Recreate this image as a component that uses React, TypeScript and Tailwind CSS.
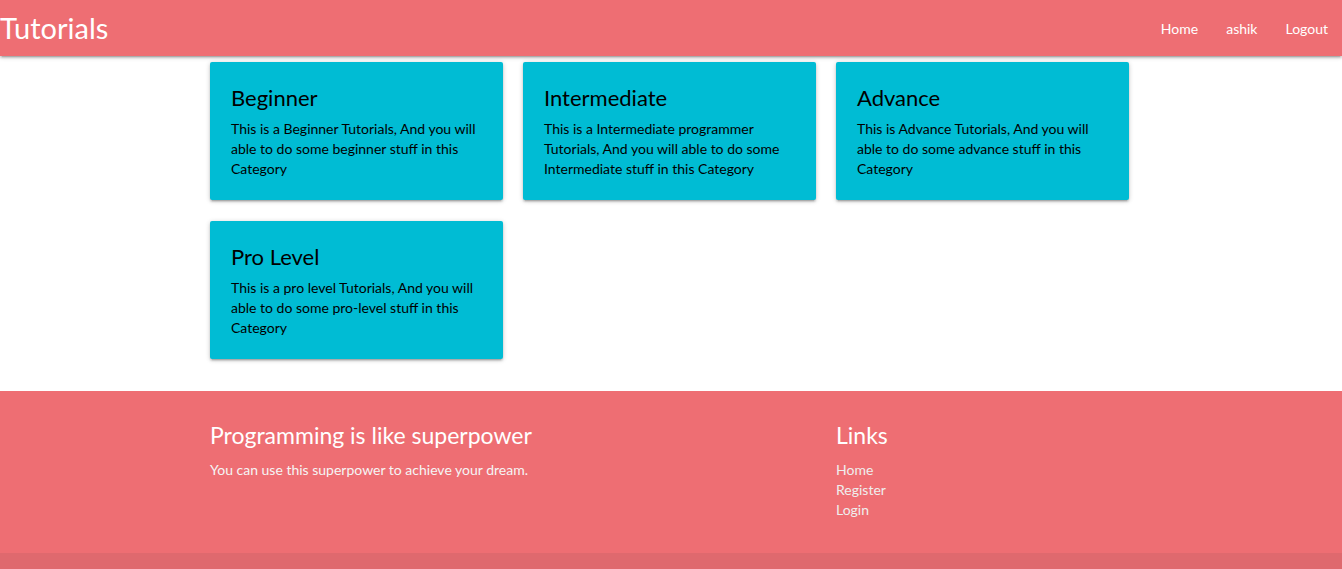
const cards = [
  {
    title: "Beginner",
    lines: ["This is a Beginner Tutorials, And you will", "able to do some beginner stuff in this", "Category"],
  },
  {
    title: "Intermediate",
    lines: ["This is a Intermediate programmer", "Tutorials, And you will able to do some", "Intermediate stuff in this Category"],
  },
  {
    title: "Advance",
    lines: ["This is Advance Tutorials, And you will", "able to do some advance stuff in this", "Category"],
  },
  {
    title: "Pro Level",
    lines: ["This is a pro level Tutorials, And you will", "able to do some pro-level stuff in this", "Category"],
  },
];

function Card({ title, lines }: { title: string; lines: string[] }) {
  return (
    <div className="h-[138px] rounded-[2px] bg-[#00bcd4] pl-[21px] pt-[20px] text-black shadow-[0_2px_2px_0_rgba(0,0,0,0.14),0_3px_1px_-2px_rgba(0,0,0,0.12),0_1px_5px_0_rgba(0,0,0,0.2)]">
      <span className="block text-[22px] leading-[32px]">{title}</span>
      <p className="mt-[5px] text-[14px] leading-[20px]">
        {lines.map((l) => (
          <span key={l} className="block whitespace-nowrap">
            {l}
          </span>
        ))}
      </p>
    </div>
  );
}

export default function App() {
  return (
    <div
      className="min-h-[569px] bg-white"
      style={{ fontFamily: 'Lato, "Open Sans", sans-serif' }}
    >
      {/* Nav */}
      <nav className="relative z-10 flex h-[56px] items-center justify-between bg-[#ee6e73] text-white shadow-[0_2px_2px_0_rgba(0,0,0,0.14),0_3px_1px_-2px_rgba(0,0,0,0.12),0_1px_5px_0_rgba(0,0,0,0.2)]">
        <a className="text-[29px] leading-[56px]">Tutorials</a>
        <ul className="flex text-[14px]">
          <li className="px-[14px]">Home</li>
          <li className="px-[14px]">ashik</li>
          <li className="px-[14px]">Logout</li>
        </ul>
      </nav>

      {/* Cards */}
      <main className="ml-[210px] w-[919px] pt-[6px] pb-[32px]">
        <div className="grid grid-cols-3 gap-x-[20px] gap-y-[21px]">
          {cards.map((c) => (
            <Card key={c.title} title={c.title} lines={c.lines} />
          ))}
        </div>
      </main>

      {/* Footer */}
      <footer className="bg-[#ee6e73] text-white">
        <div className="ml-[210px] grid h-[162px] w-[919px] grid-cols-3 gap-x-[20px] pt-[29px]">
          <div className="col-span-2">
            <h5 className="text-[23px] leading-[30px]">Programming is like superpower</h5>
            <p className="mt-[10px] text-[14px] leading-[20px] text-[#f5f5f5]">
              You can use this superpower to achieve your dream.
            </p>
          </div>
          <div>
            <h5 className="text-[23px] leading-[30px]">Links</h5>
            <ul className="mt-[10px] text-[14px] leading-[20px] text-[#eeeeee]">
              <li>Home</li>
              <li>Register</li>
              <li>Login</li>
            </ul>
          </div>
        </div>
        <div className="h-[16px] bg-[rgba(51,51,51,0.08)]"></div>
      </footer>
    </div>
  );
}
